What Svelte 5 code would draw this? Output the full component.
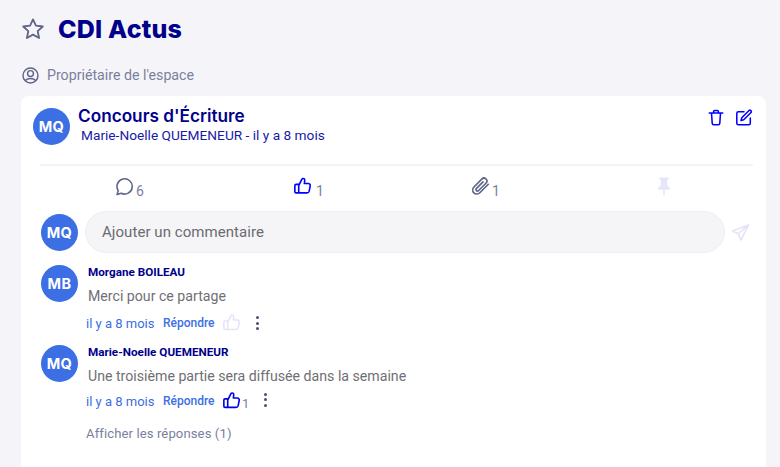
<script>
  const comments = [
    { initials: 'MB', author: 'Morgane BOILEAU', text: 'Merci pour ce partage', likes: null },
    { initials: 'MQ', author: 'Marie-Noelle QUEMENEUR', text: 'Une troisième partie sera diffusée dans la semaine', likes: 1 }
  ];
  const thumb = 'M7.5 10.5v9.5M7.5 11.5l3.6-7.2c.4-.9 1.2-1.3 2-1.1 1 .2 1.5 1 1.4 2l-.4 3.8h4.6c1.5 0 2.5 1.3 2.2 2.7l-1.2 6.2c-.3 1.3-1.3 2.1-2.6 2.1H4.4c-.8 0-1.4-.6-1.4-1.4v-7.2c0-.8.6-1.4 1.4-1.4h3.1';
</script>

<div class="page">
  <header class="title-row">
    <svg class="star" viewBox="0 0 24 24" aria-hidden="true"><path d="M12 2.4l2.9 6.3 6.9.8-5.1 4.7 1.4 6.8-6.1-3.4-6.1 3.4 1.4-6.8-5.1-4.7 6.9-.8z"/></svg>
    <h1>CDI Actus</h1>
  </header>

  <div class="owner">
    <svg viewBox="0 0 20 20" aria-hidden="true"><circle cx="10" cy="10" r="7.9"/><circle cx="10" cy="8" r="3.1"/><path d="M4.6 15.4c1-1.6 3-2.3 5.4-2.3s4.400.7 5.400 2.300"/></svg>
    <span>Propriétaire de l'espace</span>
  </div>

  <main class="card">
    <div class="post-head">
      <div class="avatar big">MQ</div>
      <div class="post-info">
        <h2>Concours d'Écriture</h2>
        <p>Marie-Noelle QUEMENEUR - il y a 8 mois</p>
      </div>
      <div class="post-actions">
        <svg viewBox="0 0 20 20" aria-hidden="true"><path d="M2.500 5h15M5 5l.8 11.500c.1.900.7 1.500 1.600 1.500h5.200c.9 0 1.500-.6 1.600-1.500L15 5M7.300 5V3.500c0-.8.5-1.300 1.300-1.300h2.800c.8 0 1.300.5 1.300 1.300V5"/></svg>
        <svg viewBox="0 0 20 20" aria-hidden="true"><path d="M10 3.500H3.800C2.800 3.500 2 4.300 2 5.300v11c0 1 .8 1.700 1.800 1.700h11.400c1 0 1.800-.7 1.800-1.700V10.500"/><path d="M7.500 10.300L15.600 2.200c.5-.5 1.300-.5 1.800 0l.4.4c.5.500.5 1.300 0 1.800l-8.100 8.100-3 .8z"/></svg>
      </div>
    </div>
    <div class="divider"></div>

    <div class="stats">
      <div class="stat">
        <svg class="grey" viewBox="2 1.500 17 17" aria-hidden="true"><path d="M3 17.500l1.100-3.600A7.200 7.200 0 1 1 6.900 16.400z"/></svg>
        <span>6</span>
      </div>
      <div class="stat wide">
        <svg class="blue" viewBox="2 2 21 21" aria-hidden="true"><path d={thumb}/></svg>
        <span>1</span>
      </div>
      <div class="stat">
        <svg class="grey" viewBox="2.500 2 16 17" aria-hidden="true"><path d="M17 8.500l-7.300 7.400c-1.700 1.700-4.200 1.700-5.600.3s-1.400-3.800.3-5.500l6.800-6.800c1.100-1.100 2.800-1.100 3.800-.1s1 2.700-.1 3.800l-6.500 6.500c-.6.600-1.500.6-2 .1s-.5-1.400.1-2l5.800-5.800"/></svg>
        <span>1</span>
      </div>
      <div class="stat">
        <svg class="pin" viewBox="3.500 1.500 13 18.500" aria-hidden="true"><path d="M5.500 2h9v1.600L13 5v4.300l2.800 3v1.500h-5v4.700L10 20l-.8-1.500v-4.700h-5v-1.500l2.800-3V5L5.500 3.600z"/></svg>
      </div>
    </div>

    <div class="composer">
      <div class="avatar">MQ</div>
      <div class="input">Ajouter un commentaire</div>
      <svg class="send" viewBox="0 0 20 20" aria-hidden="true"><path d="M18.500 2L1.500 8.500l6 2.800 3 6.700zM18.500 2L7.500 11.300"/></svg>
    </div>

    {#each comments as c}
      <div class="comment" class:has-likes={c.likes}>
        <div class="avatar">{c.initials}</div>
        <div class="comment-body">
          <div class="author">{c.author}</div>
          <div class="text">{c.text}</div>
          <div class="meta">
            <span class="time">il y a 8 mois</span>
            <span class="reply">Répondre</span>
            <svg class="thumb" viewBox="2 2 21 21" aria-hidden="true"><path d={thumb}/></svg>
            {#if c.likes}<span class="count">{c.likes}</span>{/if}
            <span class="dots"><i></i><i></i><i></i></span>
          </div>
        </div>
      </div>
    {/each}

    <div class="more">Afficher les réponses (1)</div>
  </main>
</div>

<style>
  :global(body) { margin: 0; background: #f5f5f9; }
  .page {
    height: 467px; box-sizing: border-box; overflow: hidden;
    padding: 15px 14px 0 21px;
    font-family: Roboto, "Liberation Sans", sans-serif;
  }
  .title-row { display: flex; align-items: center; gap: 13px; height: 28px; }
  .star { width: 24px; height: 24px; fill: none; stroke: #5f6488; stroke-width: 1.8; stroke-linejoin: round; }
  h1 {
    margin: 0; font-family: Inter, sans-serif; font-weight: 800; font-size: 25px;
    color: #00008b; letter-spacing: 0.2px; line-height: 28px;
  }
  .owner { display: flex; align-items: center; gap: 7px; margin-top: 22px; height: 20px; color: #7b7f9e; font-size: 14.200px; }
  .owner svg { width: 19px; height: 19px; fill: none; stroke: #5f6488; stroke-width: 1.5; }
  .card { margin-top: 11px; background: #fff; border-radius: 8px 8px 0 0; height: 400px; padding: 12px 12px 0 12px; box-sizing: border-box; }
  .post-head { display: flex; align-items: flex-start; height: 49px; }
  .divider { height: 2px; background: #f3f3f6; margin: 7px 1px 0 7px; }
  .avatar {
    flex: none; width: 37px; height: 37px; border-radius: 50%; background: #3b6fe3; color: #fff;
    display: flex; align-items: center; justify-content: center;
    font-family: Inter, sans-serif; font-weight: 700; font-size: 14.500px; letter-spacing: 0.4px;
  }
  .post-info { margin-left: 8px; flex: 1; margin-top: -3px; }
  h2 { margin: 0; font-family: Inter, sans-serif; font-weight: 600; font-size: 17.200px; line-height: 21px; color: #00008b; }
  .post-info p { margin: 0 0 0 3px; font-size: 13.700px; line-height: 19px; color: #1a1aa6; }
  .post-actions { display: flex; gap: 10px; margin-right: 1px; }
  .post-actions svg { width: 18px; height: 19px; fill: none; stroke: #0000ff; stroke-width: 1.700; stroke-linecap: round; stroke-linejoin: round; }
  .stats { display: grid; grid-template-columns: 178px 178px 184px 100px; padding-left: 83px; height: 46px; align-items: flex-start; margin-top: -1px; }
  .stat { display: flex; align-items: flex-end; gap: 2px; height: 32px; color: #7b7f9e; font-size: 14px; line-height: 16px; }
  .stat span { margin-bottom: -2px; }
  .stat.wide { gap: 4px; }
  .stat svg { width: 18px; height: 19px; margin-bottom: 1px; fill: none; stroke-width: 1.500; stroke-linejoin: round; stroke-linecap: round; }
  .stat .grey { stroke: #5f6488; }
  .stat .blue { stroke: #0000ff; stroke-width: 1.900; }
  .stat .pin { width: 16px; fill: #e6e6fa; stroke: none; }
  .composer { display: flex; align-items: center; padding-left: 8px; height: 42px; }
  .input {
    width: 640px; margin-left: 7px; height: 42px; box-sizing: border-box; padding-left: 16px;
    display: flex; align-items: center; background: #f5f5f7; border: 1px solid #f0f0f3; border-radius: 21px;
    color: #6b6b70; font-size: 15px; letter-spacing: 0.06px;
  }
  .send { width: 19px; height: 19px; margin-left: 6px; fill: none; stroke: #e3e3f8; stroke-width: 1.600; stroke-linejoin: round; }
  .comment { display: flex; padding-left: 8px; margin-top: 12px; }
  .comment.has-likes { margin-top: 10px; }
  .comment-body { margin-left: 8px; margin-top: -1px; }
  .author { margin-left: 2px; font-size: 11.700px; font-weight: 700; line-height: 16px; color: #00008b; }
  .text { margin: 6px 0 0 2px; font-size: 14.150px; line-height: 20px; color: #6f6f74; }
  .meta { display: flex; align-items: center; height: 24px; margin-top: 5px; font-size: 13px; color: #3b6fe3; white-space: nowrap; }
  .has-likes .meta { margin-top: 3px; }
  .time { width: 77px; }
  .reply { font-size: 12px; font-weight: 500; width: 60px; }
  .thumb { width: 18px; height: 18px; fill: none; stroke: #e3e3f8; stroke-width: 1.700; stroke-linejoin: round; stroke-linecap: round; }
  .has-likes .thumb { stroke: #0000e6; stroke-width: 1.900; }
  .count { margin: 4px 0 0 1px; font-size: 13px; color: #7b7f9e; }
  .dots { display: flex; flex-direction: column; gap: 2.500px; margin-left: 15px; }
  .has-likes .dots { margin-top: -3px; }
  .dots i { width: 3px; height: 3px; border-radius: 50%; background: #4a4f70; }
  .more { margin: 13px 0 0 53px; font-size: 13.100px; color: #7b7f9e; letter-spacing: 0.1px; }
</style>
